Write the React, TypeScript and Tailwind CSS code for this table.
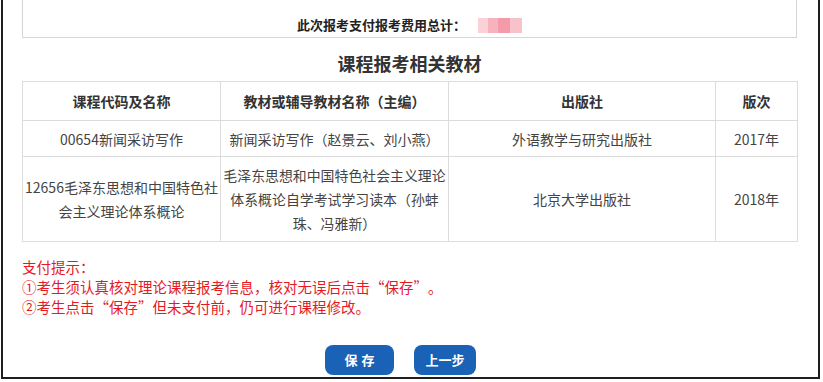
import React from "react";

const font = { fontFamily: '"Noto Sans CJK SC", "Noto Sans", sans-serif' };

function LQ() {
  return <span className="inline-block w-[14.5px] text-right">“</span>;
}
function RQ() {
  return <span className="inline-block w-[14.5px] text-left">”</span>;
}

export default function App() {
  const th = "border border-[#dcdcdc] text-[14px] font-bold text-[#333] text-center align-middle";
  const td = "border border-[#dcdcdc] text-[14px] text-[#444] text-center align-middle leading-[24px] px-0";
  return (
    <div lang="zh-CN" className="w-[823px] h-[382px] bg-white overflow-hidden" style={font}>
      <div className="ml-[1px] w-[819px] h-[379px] border-l-2 border-r-2 border-b-2 border-[#1e1e1e] pl-[19px] pr-[21px] flex flex-col">
        <div className="h-[38px] border border-t-0 border-[#d6d6d6] flex justify-center items-start pt-[16px]">
          <div className="flex items-center gap-[12px]">
            <span className="text-[13px] font-bold text-[#222] leading-[18px]">此次报考支付报考费用总计：</span>
            <span className="flex h-[15px]">
              <span className="w-[10px] bg-[#fbd0d6]" />
              <span className="w-[10px] bg-[#f7b3bd]" />
              <span className="w-[12px] bg-[#f49aa8]" />
              <span className="w-[12px] bg-[#f8c2ca]" />
            </span>
          </div>
        </div>
        <div className="mt-[13px] h-[24px] leading-[24px] text-center text-[18px] font-bold text-[#333]">课程报考相关教材</div>
        <table className="mt-[6px] border-collapse table-fixed w-[775px]">
          <colgroup>
            <col className="w-[198px]" />
            <col className="w-[228px]" />
            <col className="w-[267px]" />
            <col className="w-[82px]" />
          </colgroup>
          <thead>
            <tr className="h-[39px]">
              <th className={th}>课程代码及名称</th>
              <th className={th}>教材或辅导教材名称（主编）</th>
              <th className={th}>出版社</th>
              <th className={th}>版次</th>
            </tr>
          </thead>
          <tbody>
            <tr className="h-[36px]">
              <td className={td}>00654新闻采访写作</td>
              <td className={td}>新闻采访写作（赵景云、刘小燕）</td>
              <td className={td}>外语教学与研究出版社</td>
              <td className={td}>2017年</td>
            </tr>
            <tr className="h-[85px]">
              <td className={td}>12656毛泽东思想和中国特色社会主义理论体系概论</td>
              <td className={td}>
                <span className="text-[13.9px]">毛泽东思想和中国特色社会主义理论体系概论自学考试学习读本（孙蚌珠、冯雅新）</span>
              </td>
              <td className={td}>北京大学出版社</td>
              <td className={td}>2018年</td>
            </tr>
          </tbody>
        </table>
        <div className="mt-[15px] text-[14.5px] leading-[20px] text-[#e6191f]">
          <div>支付提示：</div>
          <div>①考生须认真核对理论课程报考信息，核对无误后点击<LQ />保存<RQ />。</div>
          <div>②考生点击<LQ />保存<RQ />但未支付前，仍可进行课程修改。</div>
        </div>
        <div className="mt-[28px] flex justify-center gap-[20px] pr-[18px]">
          <button className="w-[69px] h-[30px] rounded-[8px] bg-[#1962b6] text-white text-[13px] font-bold tracking-[4px] pl-[4px]">保存</button>
          <button className="w-[62px] h-[30px] rounded-[8px] bg-[#1962b6] text-white text-[13px] font-bold">上一步</button>
        </div>
      </div>
    </div>
  );
}
